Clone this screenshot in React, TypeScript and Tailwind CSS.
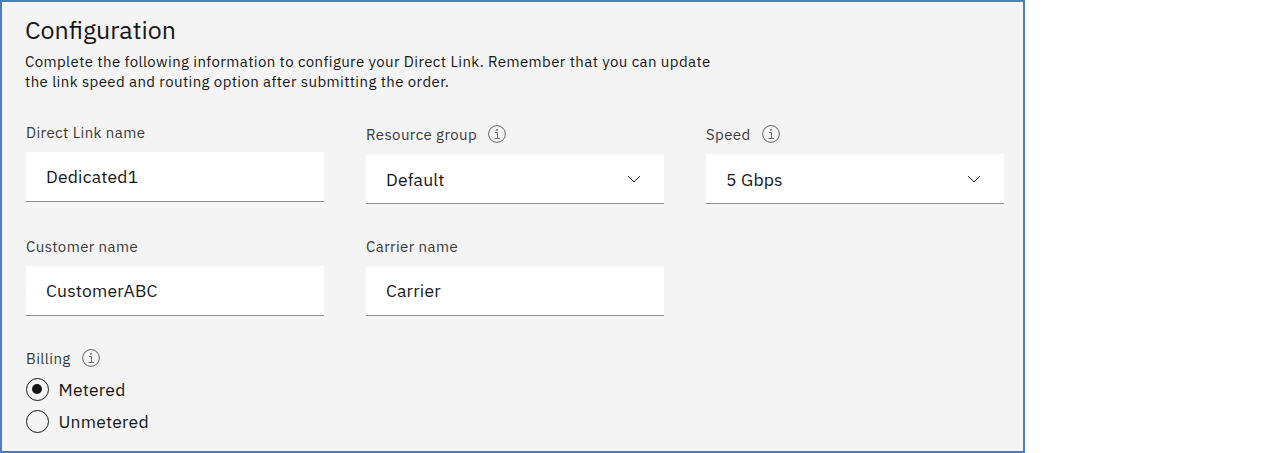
import type { ReactNode } from "react";

function InfoIcon() {
  return (
    <svg width="18" height="18" viewBox="0 0 18 18" fill="none" stroke="#4a4a4a" className="shrink-0">
      <circle cx="9" cy="9" r="8.4" strokeWidth="0.85" />
      <path d="M7 7.5H9.5V13M6.5 13.5H12" strokeWidth="0.8" />
      <circle cx="9" cy="4.8" r="0.9" fill="#4a4a4a" stroke="none" />
    </svg>
  );
}

function Chevron() {
  return (
    <svg width="14" height="8" viewBox="0 0 14 8" fill="none" stroke="#161616" strokeWidth="1">
      <path d="M1.2 1.2L7 6.9L12.8 1.2" />
    </svg>
  );
}

function Field({ label, info = false, children }: { label: string; info?: boolean; children: ReactNode }) {
  return (
    <div className="w-[298px]">
      <div className={`flex text-[15px] leading-5 tracking-[0.4px] text-[#393939] ${info ? "h-[30px] gap-[11px] pt-px" : "-mt-px h-[29px]"}`}>
        <span>{label}</span>
        {info && <InfoIcon />}
      </div>
      {children}
    </div>
  );
}

function TextInput({ value }: { value: string }) {
  return (
    <div className="flex h-[50px] items-center border-b border-[#8d8d8d] bg-white px-5 text-[17.5px] leading-6 tracking-[0.2px] text-[#161616]">
      {value}
    </div>
  );
}

function Dropdown({ value }: { value: string }) {
  return (
    <div className="flex h-[50px] items-center justify-between border-b border-[#8d8d8d] bg-white pl-5 pr-[23px] text-[17.5px] leading-6 tracking-[0.2px] text-[#161616]">
      <span className="pt-[2px]">{value}</span>
      <Chevron />
    </div>
  );
}

function Radio({ label, checked = false }: { label: string; checked?: boolean }) {
  return (
    <label className="flex h-6 items-center gap-[8.5px]">
      <svg width="24" height="24" viewBox="0 0 24 24">
        <circle cx="11.5" cy="11.5" r="11" fill="none" stroke="#161616" />
        {checked && <circle cx="11" cy="11" r="5" fill="#161616" />}
      </svg>
      <span>{label}</span>
    </label>
  );
}

export default function App() {
  return (
    <div className="h-[453px] w-full whitespace-nowrap bg-white font-['IBM_Plex_Sans','Roboto',sans-serif]">
      <main className="h-[453px] w-[1025px] border-2 border-[#4f7db8] bg-[#f4f4f4] pl-6 text-[#161616]">
        <h1 className="-ml-px pt-3 text-[25px] leading-8">Configuration</h1>
        <p className="-ml-px mt-[6px] text-[15px] leading-5 tracking-[0.395px]">
          Complete the following information to configure your Direct Link. Remember that you can update
          <br />
          the link speed and routing option after submitting the order.
        </p>
        <div className="mt-8 grid grid-cols-[298px_298px_298px] gap-x-[42px]">
          <Field label="Direct Link name"><TextInput value="Dedicated1" /></Field>
          <Field info label="Resource group"><Dropdown value="Default" /></Field>
          <Field info label="Speed"><Dropdown value="5 Gbps" /></Field>
        </div>
        <div className="mt-[34px] grid grid-cols-[298px_298px] gap-x-[42px]">
          <Field label="Customer name"><TextInput value="CustomerABC" /></Field>
          <Field label="Carrier name"><TextInput value="Carrier" /></Field>
        </div>
        <div className="mt-[33px] flex h-5 gap-[11px] text-[15px] leading-5 tracking-[0.4px] text-[#393939]">
          <span>Billing</span>
          <InfoIcon />
        </div>
        <div className="mt-[9px] flex flex-col gap-2 text-[17.5px] leading-6 tracking-[0.2px]">
          <Radio checked label="Metered" />
          <Radio label="Unmetered" />
        </div>
      </main>
    </div>
  );
}
